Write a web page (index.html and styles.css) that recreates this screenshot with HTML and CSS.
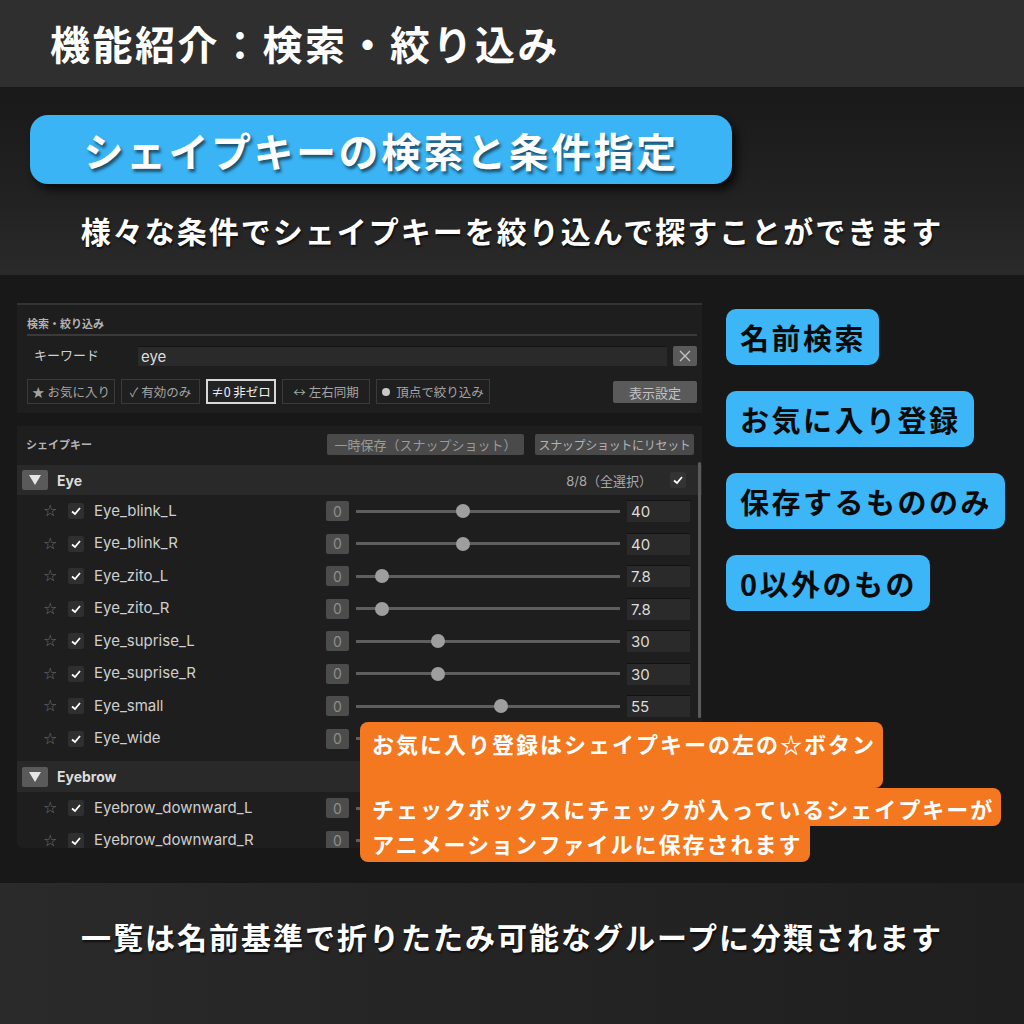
FILE: index.html
```html
<!DOCTYPE html>
<html lang="ja">
<head>
<meta charset="utf-8">
<title>機能紹介：検索・絞り込み</title>
<link rel="stylesheet" href="styles.css">
</head>
<body>
<div class="page">
  <header class="hdr"><h1 class="hdr-title">機能紹介：検索・絞り込み</h1></header>

  <section class="intro">
    <div class="pill"><span class="pill-text">シェイプキーの検索と条件指定</span></div>
    <p class="lead">様々な条件でシェイプキーを絞り込んで探すことができます</p>
  </section>

  <section class="main">
    <div class="panels">
      <div class="panel search">
        <div class="search-title">検索・絞り込み</div>
        <div class="kw-row">
          <span class="kw-label">キーワード</span>
          <div class="kw-input">eye</div>
          <div class="kw-clear"><svg viewBox="0 0 24 20" width="24" height="20"><path d="M7 5 L17 15 M17 5 L7 15" stroke="#c4c4c4" stroke-width="1.4" fill="none"/></svg></div>
        </div>
        <div class="filter-row">
          <span class="fbtn w88">★ お気に入り</span>
          <span class="fbtn w79">✓ 有効のみ</span>
          <span class="fbtn w70 sel">≠0 非ゼロ</span>
          <span class="fbtn w88">↔ 左右同期</span>
          <span class="fbtn w114"><span class="dot"></span>頂点で絞り込み</span>
          <span class="sbtn">表示設定</span>
        </div>
      </div>

      <div class="panel keys">
        <div class="keys-head">
          <span class="keys-title">シェイプキー</span>
          <span class="gbtn w197">一時保存（スナップショット）</span>
          <span class="gbtn w159 light">スナップショットにリセット</span>
        </div>

        <div class="group">
          <span class="tri"><svg viewBox="0 0 26 20" width="26" height="20"><polygon points="7,5 19,5 13,15" fill="#e6e6e6"/></svg></span>
          <span class="group-name">Eye</span>
          <span class="group-count">8/8（全選択）</span>
          <span class="cb cb-group"><svg viewBox="0 0 16 16" width="16" height="16"><polyline points="4,8.5 7,11 12,5" stroke="#fff" stroke-width="1.8" fill="none"/></svg></span>
        </div>

        <div class="row"><span class="star">☆</span><span class="cb"><svg viewBox="0 0 16 16" width="16" height="16"><polyline points="4,8.5 7,11 12,5" stroke="#fff" stroke-width="1.8" fill="none"/></svg></span><span class="name">Eye_blink_L</span><span class="zero">0</span><span class="track"><span class="knob" style="--v:0.40"></span></span><span class="val">40</span></div>
        <div class="row"><span class="star">☆</span><span class="cb"><svg viewBox="0 0 16 16" width="16" height="16"><polyline points="4,8.5 7,11 12,5" stroke="#fff" stroke-width="1.8" fill="none"/></svg></span><span class="name">Eye_blink_R</span><span class="zero">0</span><span class="track"><span class="knob" style="--v:0.40"></span></span><span class="val">40</span></div>
        <div class="row"><span class="star">☆</span><span class="cb"><svg viewBox="0 0 16 16" width="16" height="16"><polyline points="4,8.5 7,11 12,5" stroke="#fff" stroke-width="1.8" fill="none"/></svg></span><span class="name">Eye_zito_L</span><span class="zero">0</span><span class="track"><span class="knob" style="--v:0.078"></span></span><span class="val">7.8</span></div>
        <div class="row"><span class="star">☆</span><span class="cb"><svg viewBox="0 0 16 16" width="16" height="16"><polyline points="4,8.5 7,11 12,5" stroke="#fff" stroke-width="1.8" fill="none"/></svg></span><span class="name">Eye_zito_R</span><span class="zero">0</span><span class="track"><span class="knob" style="--v:0.078"></span></span><span class="val">7.8</span></div>
        <div class="row"><span class="star">☆</span><span class="cb"><svg viewBox="0 0 16 16" width="16" height="16"><polyline points="4,8.5 7,11 12,5" stroke="#fff" stroke-width="1.8" fill="none"/></svg></span><span class="name">Eye_suprise_L</span><span class="zero">0</span><span class="track"><span class="knob" style="--v:0.30"></span></span><span class="val">30</span></div>
        <div class="row"><span class="star">☆</span><span class="cb"><svg viewBox="0 0 16 16" width="16" height="16"><polyline points="4,8.5 7,11 12,5" stroke="#fff" stroke-width="1.8" fill="none"/></svg></span><span class="name">Eye_suprise_R</span><span class="zero">0</span><span class="track"><span class="knob" style="--v:0.30"></span></span><span class="val">30</span></div>
        <div class="row"><span class="star">☆</span><span class="cb"><svg viewBox="0 0 16 16" width="16" height="16"><polyline points="4,8.5 7,11 12,5" stroke="#fff" stroke-width="1.8" fill="none"/></svg></span><span class="name">Eye_small</span><span class="zero">0</span><span class="track"><span class="knob" style="--v:0.55"></span></span><span class="val">55</span></div>
        <div class="row"><span class="star">☆</span><span class="cb"><svg viewBox="0 0 16 16" width="16" height="16"><polyline points="4,8.5 7,11 12,5" stroke="#fff" stroke-width="1.8" fill="none"/></svg></span><span class="name">Eye_wide</span><span class="zero">0</span><span class="track"><span class="knob" style="--v:0.10"></span></span><span class="val">10</span></div>

        <div class="group group2">
          <span class="tri"><svg viewBox="0 0 26 20" width="26" height="20"><polygon points="7,5 19,5 13,15" fill="#e6e6e6"/></svg></span>
          <span class="group-name">Eyebrow</span>
        </div>
        <div class="row"><span class="star">☆</span><span class="cb"><svg viewBox="0 0 16 16" width="16" height="16"><polyline points="4,8.5 7,11 12,5" stroke="#fff" stroke-width="1.8" fill="none"/></svg></span><span class="name">Eyebrow_downward_L</span><span class="zero">0</span><span class="track"><span class="knob" style="--v:0.1"></span></span><span class="val">10</span></div>
        <div class="row"><span class="star">☆</span><span class="cb"><svg viewBox="0 0 16 16" width="16" height="16"><polyline points="4,8.5 7,11 12,5" stroke="#fff" stroke-width="1.8" fill="none"/></svg></span><span class="name">Eyebrow_downward_R</span><span class="zero">0</span><span class="track"><span class="knob" style="--v:0.1"></span></span><span class="val">10</span></div>

        <span class="scrollbar"></span>
      </div>
    </div>

    <div class="labels">
      <span class="label">名前検索</span>
      <span class="label">お気に入り登録</span>
      <span class="label">保存するもののみ</span>
      <span class="label">0以外のもの</span>
    </div>

    <div class="callout">
      <div class="co co1">お気に入り登録はシェイプキーの左の☆ボタン</div>
      <div class="co co2">チェックボックスにチェックが入っているシェイプキーが</div>
      <div class="co co3">アニメーションファイルに保存されます</div>
    </div>
  </section>

  <footer class="foot"><p class="lead">一覧は名前基準で折りたたみ可能なグループに分類されます</p></footer>
</div>
</body>
</html>
```

FILE: styles.css
```css
* { box-sizing: border-box; }
html, body { margin: 0; padding: 0; }
body {
  width: 1024px;
  height: 1024px;
  overflow: hidden;
  background: #181818;
  font-family: "Noto Sans CJK JP", sans-serif;
}
.page { width: 1024px; height: 1024px; display: flex; flex-direction: column; }

/* header */
.hdr {
  height: 87px;
  background: #2f2f2f;
  display: flex;
  align-items: center;
  padding-left: 50px;
}
.hdr-title {
  margin: 0;
  color: #fff;
  font-size: 40px;
  font-weight: 700;
  letter-spacing: 2.5px;
  line-height: 1;
  transform: translateY(-1px);
}

/* intro */
.intro {
  height: 188px;
  background: linear-gradient(180deg, #191919 0%, #222 60%, #2a2a2a 100%);
  padding-top: 28px;
}
.pill {
  margin-left: 30px;
  width: 702px;
  height: 69px;
  border-radius: 18px;
  background: #3ab4f5;
  box-shadow: 5px 6px 8px rgba(0,0,0,0.7);
  display: flex;
  align-items: center;
  justify-content: center;
}
.pill-text {
  color: #fff;
  font-size: 40px;
  font-weight: 700;
  letter-spacing: 2.5px;
  text-shadow: 2px 3px 3px rgba(0,0,0,0.55);
  line-height: 1;
}
.lead {
  margin: 26px 0 0;
  text-align: center;
  color: #fff;
  font-size: 30px;
  font-weight: 700;
  letter-spacing: 2px;
  line-height: 40px;
  text-shadow: 1px 2px 2px rgba(0,0,0,0.6);
}

/* main */
.main {
  height: 608px;
  background: #181818;
  position: relative;
  display: flex;
  padding: 28px 0 0 17px;
}
.panels { width: 685px; display: flex; flex-direction: column; }
.panel { background: #1e1e1e; font-family: Inter, "Noto Sans CJK JP", sans-serif; }

.search {
  height: 110px;
  border-top: 2px solid #333;
  padding: 7px 5px 0 10px;
}
.search-title {
  height: 24px;
  line-height: 22px;
  font-size: 11px;
  font-weight: 700;
  color: #b4b4b4;
  border-bottom: 2px solid #3a3a3a;
  font-family: "Noto Sans CJK JP", sans-serif;
}
.kw-row { display: flex; align-items: center; margin-top: 10px; height: 20px; }
.kw-label {
  width: 111px;
  padding-left: 7px;
  font-size: 13px;
  color: #d0d0d0;
  font-family: "Noto Sans CJK JP", sans-serif;
  margin-top: -3px;
}
.kw-input {
  width: 529px;
  height: 20px;
  background: #2a2a2a;
  border-top: 1px solid #151515;
  color: #ddd;
  font-size: 15px;
  line-height: 19px;
  padding-left: 3px;
}
.kw-clear {
  margin-left: 6px;
  width: 24px;
  height: 20px;
  background: #5a5a5a;
  border-radius: 2px;
  display: flex;
}
.filter-row { display: flex; align-items: center; gap: 6px; margin-top: 13px; height: 25px; }
.fbtn {
  height: 25px;
  border: 1px solid #3a3a3a;
  background: #1f1f1f;
  color: #a4a4a4;
  font-size: 12.5px;
  display: flex;
  align-items: center;
  justify-content: center;
  white-space: nowrap;
  font-family: "Noto Sans CJK JP", sans-serif;
}
.fbtn.sel { border: 2px solid #d8d8d8; color: #f0f0f0; background: #232323; }
.w88 { width: 88px; }
.w79 { width: 79px; }
.w70 { width: 70px; }
.w114 { width: 114px; }
.dot { width: 8px; height: 8px; border-radius: 50%; background: #c8c8c8; margin-right: 6px; }
.sbtn {
  margin-left: auto;
  margin-top: 1px;
  width: 84px;
  height: 22px;
  background: #5a5a5a;
  border-radius: 2px;
  color: #c2c2c2;
  font-size: 13px;
  display: flex;
  align-items: center;
  justify-content: center;
  font-family: "Noto Sans CJK JP", sans-serif;
}

/* keys panel */
.keys {
  margin-top: 13px;
  height: 422px;
  position: relative;
  overflow: hidden;
  border-radius: 0 0 6px 6px;
  background: #1e1e1e;
}
.keys-head { height: 39px; display: flex; align-items: center; padding-left: 9px; padding-bottom: 3px; }
.keys-title {
  width: 301px;
  font-size: 11px;
  font-weight: 700;
  color: #b4b4b4;
  font-family: "Noto Sans CJK JP", sans-serif;
}
.gbtn {
  height: 21px;
  background: #4a4a4a;
  border-radius: 2px;
  color: #9a9a9a;
  font-size: 13px;
  display: flex;
  align-items: center;
  justify-content: center;
  white-space: nowrap;
  font-family: "Noto Sans CJK JP", sans-serif;
}
.gbtn.light { color: #b4b4b4; margin-left: 11px; font-size: 12px; letter-spacing: -0.3px; }
.w197 { width: 197px; }
.w159 { width: 159px; }

.group {
  height: 30px;
  background: #292929;
  display: flex;
  align-items: center;
  padding-left: 5px;
}
.group2 { margin-top: 6px; height: 31px; }
.tri { width: 26px; height: 20px; background: #5a5a5a; border-radius: 2px; display: flex; }
.group-name { margin-left: 9px; font-size: 14px; font-weight: 700; color: #dcdcdc; }
.group-count {
  margin-left: auto;
  font-size: 13px;
  color: #a8a8a8;
  font-family: Inter, "Noto Sans CJK JP", sans-serif;
}
.cb { width: 16px; height: 16px; background: #2f2f2f; border-radius: 2px; display: flex; flex: none; }
.cb-group { margin-left: 18px; margin-right: 16px; background: #333; }

.row { height: 32.5px; display: flex; align-items: center; padding-left: 26px; }
.star { width: 12px; color: #707070; font-size: 16px; line-height: 1; margin-right: 13px; text-align: center; font-family: "DejaVu Sans", sans-serif; }
.name { width: 242px; padding-left: 10px; font-size: 15px; color: #cfcfcf; white-space: nowrap; margin-top: -2px; }
.zero {
  width: 23px; height: 20px;
  background: #4c4c4c;
  border-radius: 2px;
  color: #8c8c8c;
  font-size: 14px;
  display: flex; align-items: center; justify-content: center;
  margin-right: 7px;
  flex: none;
}
.track { position: relative; width: 264px; height: 3px; background: #5e5e5e; margin-right: 7px; flex: none; }
.knob {
  position: absolute;
  top: 50%;
  left: calc(6px + 252px * var(--v));
  width: 14px; height: 14px;
  border-radius: 50%;
  background: #9e9e9e;
  transform: translate(-50%, -50%);
}
.val {
  width: 63px; height: 22px;
  background: #2a2a2a;
  border-top: 1px solid #121212;
  color: #dcdcdc;
  font-size: 15px;
  line-height: 21px;
  padding-left: 4px;
  flex: none;
}
.scrollbar {
  position: absolute;
  left: 681px;
  top: 36px;
  width: 3px;
  height: 256px;
  background: #5a5a5a;
  border-radius: 2px;
}

/* labels */
.labels {
  margin-left: 24px;
  padding-top: 6px;
  display: flex;
  flex-direction: column;
  align-items: flex-start;
  gap: 26px;
}
.label {
  height: 56px;
  padding: 0 13px 0 14px;
  background: #3cb6f7;
  border-radius: 10px;
  color: #0a0a0a;
  font-size: 29px;
  font-weight: 700;
  letter-spacing: 2.5px;
  line-height: 56px;
  white-space: nowrap;
}

/* callout */
.callout {
  position: absolute;
  left: 360px;
  top: 447px;
  display: flex;
  flex-direction: column;
  align-items: flex-start;
}
.co {
  background: #f47820;
  color: #fff;
  font-size: 22px;
  font-weight: 700;
  letter-spacing: 2px;
  white-space: nowrap;
  padding: 0 7px 0 12px;
  line-height: 32px;
}
.co1 { height: 66px; padding-top: 5px; border-radius: 8px 8px 8px 0; }
.co2 { height: 38px; padding-top: 4px; border-radius: 0 8px 8px 0; }
.co3 { height: 36px; padding-top: 1px; border-radius: 0 0 8px 8px; padding-right: 8px; }

/* footer */
.foot {
  height: 141px;
  background: linear-gradient(90deg, #2a2a2a 0%, #242424 50%, #1f1f1f 100%);
  padding-top: 33px;
}
.foot .lead { margin: 0; }
```
